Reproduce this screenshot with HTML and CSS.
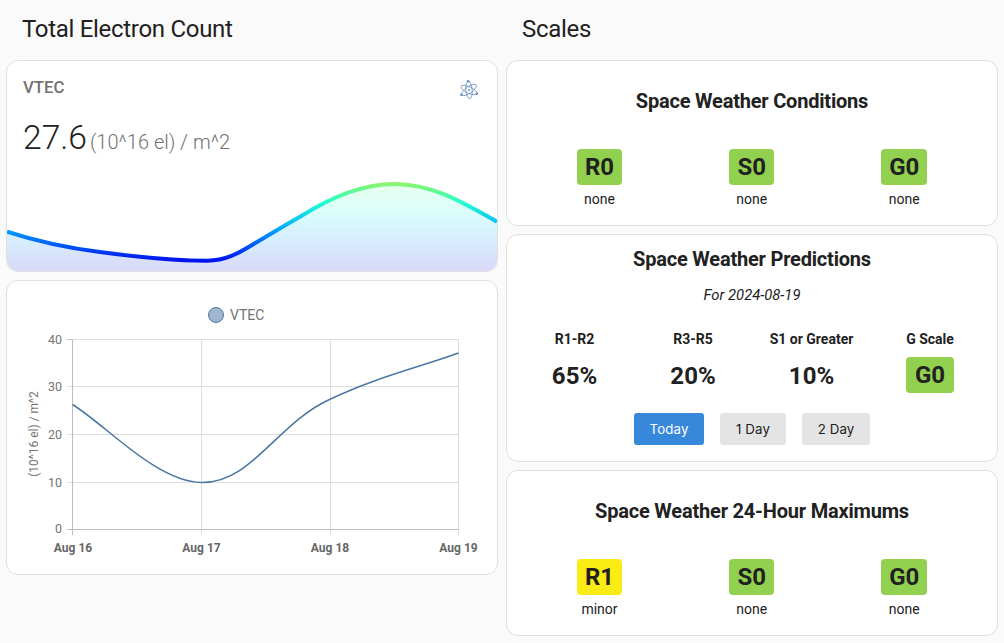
FILE: index.html
```html
<!DOCTYPE html>
<html lang="en">
  <head>
    <meta charset="utf-8" />
    <meta name="viewport" content="width=device-width, initial-scale=1" />
    <title>Space Weather</title>
    <link rel="stylesheet" href="styles.css">
  </head>

  <body>
    <main class="page">
      <section class="column">
        <h2 class="column-title">Total Electron Count</h2>

        <div class="card stat-card">
          <div class="stat-head">
            <span class="stat-name">VTEC</span>
            <svg class="stat-icon" viewBox="0 0 24 24" fill="none" stroke="#5f8cb8" stroke-width="0.9">
              <ellipse cx="12" cy="12" rx="10.5" ry="3.8" transform="rotate(25 12 12)" />
              <ellipse cx="12" cy="12" rx="10.5" ry="3.8" transform="rotate(85 12 12)" />
              <ellipse cx="12" cy="12" rx="10.5" ry="3.8" transform="rotate(145 12 12)" />
              <circle cx="12" cy="12" r="1.1" fill="#4f7fb0" stroke="none" />
              <circle cx="11" cy="1.6" r="1.5" fill="#5f8cb8" stroke="none" />
              <circle cx="2.8" cy="17.6" r="1.5" fill="#5f8cb8" stroke="none" />
              <circle cx="21.4" cy="16.6" r="1.5" fill="#5f8cb8" stroke="none" />
            </svg>
          </div>
          <div class="stat-value">27.6<span class="stat-unit">(10^16 el) / m^2</span></div>
          <svg class="spark" viewBox="0 0 490 112" preserveAspectRatio="none">
            <defs>
              <linearGradient id="sparkLine" gradientUnits="userSpaceOnUse" x1="0" y1="24" x2="0" y2="102">
                <stop offset="0" stop-color="#8cf56a" />
                <stop offset="0.25" stop-color="#25ffd0" />
                <stop offset="0.55" stop-color="#00b4ff" />
                <stop offset="1" stop-color="#0010f0" />
              </linearGradient>
              <linearGradient id="sparkFill" gradientUnits="userSpaceOnUse" x1="0" y1="24" x2="0" y2="112">
                <stop offset="0" stop-color="#e8ffee" />
                <stop offset="0.3" stop-color="#dcfffa" />
                <stop offset="0.6" stop-color="#d6f0ff" />
                <stop offset="1" stop-color="#d9d9f8" />
              </linearGradient>
            </defs>
            <path d="M0 72.7C35 84 60 89 93 93C130 98 170 101.7 200 101.7C222 101.7 236 91 250 83C265 74 280 65 293 57.7C325 38 355 25 388 25C425 25 455 43 490 62.7V112H0Z" fill="url(#sparkFill)" />
            <path d="M0 72.7C35 84 60 89 93 93C130 98 170 101.7 200 101.7C222 101.7 236 91 250 83C265 74 280 65 293 57.7C325 38 355 25 388 25C425 25 455 43 490 62.7" fill="none" stroke="url(#sparkLine)" stroke-width="4" />
          </svg>
        </div>

        <div class="card chart-card">
          <svg class="chart" viewBox="0 0 490 293">
            <circle cx="209" cy="34" r="7.5" fill="#a0b6d1" stroke="#4a76a3" stroke-width="1" />
            <text class="legend" x="223" y="39">VTEC</text>

            <g class="grid">
              <path d="M65 58.5H451M60 105.5H451M60 153.5H451M60 201.5H451" />
              <path d="M194.5 58V254M323.5 58V254M451.5 58V254" />
            </g>
            <path class="axis" d="M60 58.5H65.5V248.5M60 248.5H451.5M65.5 248V254" />

            <text class="tick" x="55" y="63">40</text>
            <text class="tick" x="55" y="110">30</text>
            <text class="tick" x="55" y="158">20</text>
            <text class="tick" x="55" y="206">10</text>
            <text class="tick" x="55" y="252">0</text>

            <text class="axis-title" transform="translate(31 153) rotate(-90)">(10^16 el) / m^2</text>

            <text class="date" x="66" y="271">Aug 16</text>
            <text class="date" x="194.5" y="271">Aug 17</text>
            <text class="date" x="323" y="271">Aug 18</text>
            <text class="date" x="451.5" y="271">Aug 19</text>

            <path class="line" d="M65.5 123.5C100 145 150 201 194.5 201.5C245 202 270 142 323.5 118C370 96 410 87 451.5 72" />
          </svg>
        </div>
      </section>

      <section class="column">
        <h2 class="column-title">Scales</h2>

        <div class="card scale-card">
          <h3 class="scale-title">Space Weather Conditions</h3>
          <div class="scale-row">
            <div class="scale-item"><span class="badge">R0</span><span class="badge-label">none</span></div>
            <div class="scale-item"><span class="badge">S0</span><span class="badge-label">none</span></div>
            <div class="scale-item"><span class="badge">G0</span><span class="badge-label">none</span></div>
          </div>
        </div>

        <div class="card predict-card">
          <h3 class="scale-title">Space Weather Predictions</h3>
          <p class="predict-date">For 2024-08-19</p>
          <div class="predict-row">
            <div class="predict-item"><span class="predict-name">R1-R2</span><span class="predict-value">65%</span></div>
            <div class="predict-item"><span class="predict-name">R3-R5</span><span class="predict-value">20%</span></div>
            <div class="predict-item"><span class="predict-name">S1 or Greater</span><span class="predict-value">10%</span></div>
            <div class="predict-item"><span class="predict-name">G Scale</span><span class="badge">G0</span></div>
          </div>
          <div class="day-buttons">
            <button class="day-button active">Today</button>
            <button class="day-button">1 Day</button>
            <button class="day-button">2 Day</button>
          </div>
        </div>

        <div class="card scale-card">
          <h3 class="scale-title">Space Weather 24-Hour Maximums</h3>
          <div class="scale-row">
            <div class="scale-item"><span class="badge minor">R1</span><span class="badge-label">minor</span></div>
            <div class="scale-item"><span class="badge">S0</span><span class="badge-label">none</span></div>
            <div class="scale-item"><span class="badge">G0</span><span class="badge-label">none</span></div>
          </div>
        </div>
      </section>
    </main>
  </body>
</html>
```

FILE: styles.css
```css
* {
    box-sizing: border-box;
}
body {
    margin: 0;
    background: #fafafa;
    color: #212121;
    font-family: Roboto, "Liberation Sans", sans-serif;
}
.page {
    display: grid;
    grid-template-columns: 492px 492px;
    gap: 8px;
    padding: 0 6px;
}
.column {
    display: flex;
    flex-direction: column;
    gap: 8px;
}
.column-title {
    margin: 0;
    height: 52px;
    padding: 14px 0 0 16px;
    font-size: 24px;
    line-height: 30px;
    font-weight: 400;
    letter-spacing: -0.3px;
}
.card {
    background: #fff;
    border: 1px solid #e0e0e0;
    border-radius: 12px;
    overflow: hidden;
}

/* electron count */
.stat-card {
    height: 212px;
    display: flex;
    flex-direction: column;
}
.stat-head {
    display: flex;
    flex: none;
    justify-content: space-between;
    padding: 16px 18px 0 16px;
    height: 55px;
}
.stat-name {
    font-size: 16.8px;
    line-height: 20px;
    font-weight: 500;
    color: #727272;
}
.stat-icon {
    width: 20px;
    height: 20px;
    margin-top: 3px;
}
.stat-value {
    flex: none;
    height: 43px;
    padding-left: 16px;
    font-size: 33.6px;
    line-height: 44px;
    font-weight: 300;
}
.stat-unit {
    margin-left: 3px;
    font-size: 20px;
    color: #727272;
}
.spark {
    display: block;
    flex: none;
    width: 490px;
    height: 112px;
}
.chart-card {
    height: 295px;
}
.chart {
    display: block;
    width: 490px;
    height: 293px;
}
.legend,
.tick,
.axis-title {
    font-size: 14px;
    fill: #757575;
}
.tick {
    font-size: 12.5px;
    text-anchor: end;
}
.axis-title {
    font-size: 12px;
    text-anchor: middle;
}
.date {
    font-size: 12px;
    font-weight: 700;
    fill: #666;
    text-anchor: middle;
}
.grid path {
    fill: none;
    stroke: #dedede;
    stroke-width: 1;
}
.axis {
    fill: none;
    stroke: #bdbdbd;
    stroke-width: 1;
}
.line {
    fill: none;
    stroke: #4a76a3;
    stroke-width: 1.5;
}

/* scales */
.scale-card {
    height: 166px;
    padding-top: 27px;
}
.scale-title {
    margin: 0;
    text-align: center;
    font-size: 20px;
    line-height: 26px;
    font-weight: 700;
    letter-spacing: -0.2px;
}
.scale-row {
    display: grid;
    grid-template-columns: 152px 152.5px 152.5px;
    justify-content: center;
    margin-top: 35px;
}
.scale-item,
.predict-item {
    display: flex;
    flex-direction: column;
    align-items: center;
}
.badge {
    padding: 0 8px;
    height: 36px;
    line-height: 36px;
    background: #92d14f;
    border-radius: 4px;
    font-size: 24px;
    font-weight: 700;
}
.badge.minor {
    background: #fbeb14;
}
.badge-label {
    margin-top: 5px;
    font-size: 14px;
    line-height: 18px;
}
.predict-card {
    height: 228px;
    padding-top: 11px;
}
.predict-date {
    margin: 14px 0 0;
    text-align: center;
    font-size: 14.8px;
    line-height: 18px;
    font-style: italic;
}
.predict-row {
    display: grid;
    grid-template-columns: 118px 119px 118px 119px;
    justify-content: center;
    margin-top: 26px;
    padding-left: 1px;
}
.predict-name {
    font-size: 14px;
    line-height: 18px;
    font-weight: 700;
}
.predict-item .badge {
    margin-top: 9px;
    padding: 0 9px;
}
.predict-value {
    margin-top: 10px;
    height: 36px;
    line-height: 36px;
    font-size: 24px;
    font-weight: 700;
}
.day-buttons {
    display: flex;
    justify-content: center;
    gap: 16px;
    margin-top: 19px;
}
.day-button {
    width: 70px;
    height: 32px;
    padding: 0;
    border: 0;
    border-radius: 3px;
    background: #e4e4e4;
    color: #212121;
    font-family: Inter, sans-serif;
    font-size: 13.3px;
    letter-spacing: 0.1px;
}
.day-button:nth-child(2) {
    width: 66px;
}
.day-button:nth-child(3) {
    width: 68px;
}
.day-button.active {
    background: #3787db;
    color: #fff;
}
```
